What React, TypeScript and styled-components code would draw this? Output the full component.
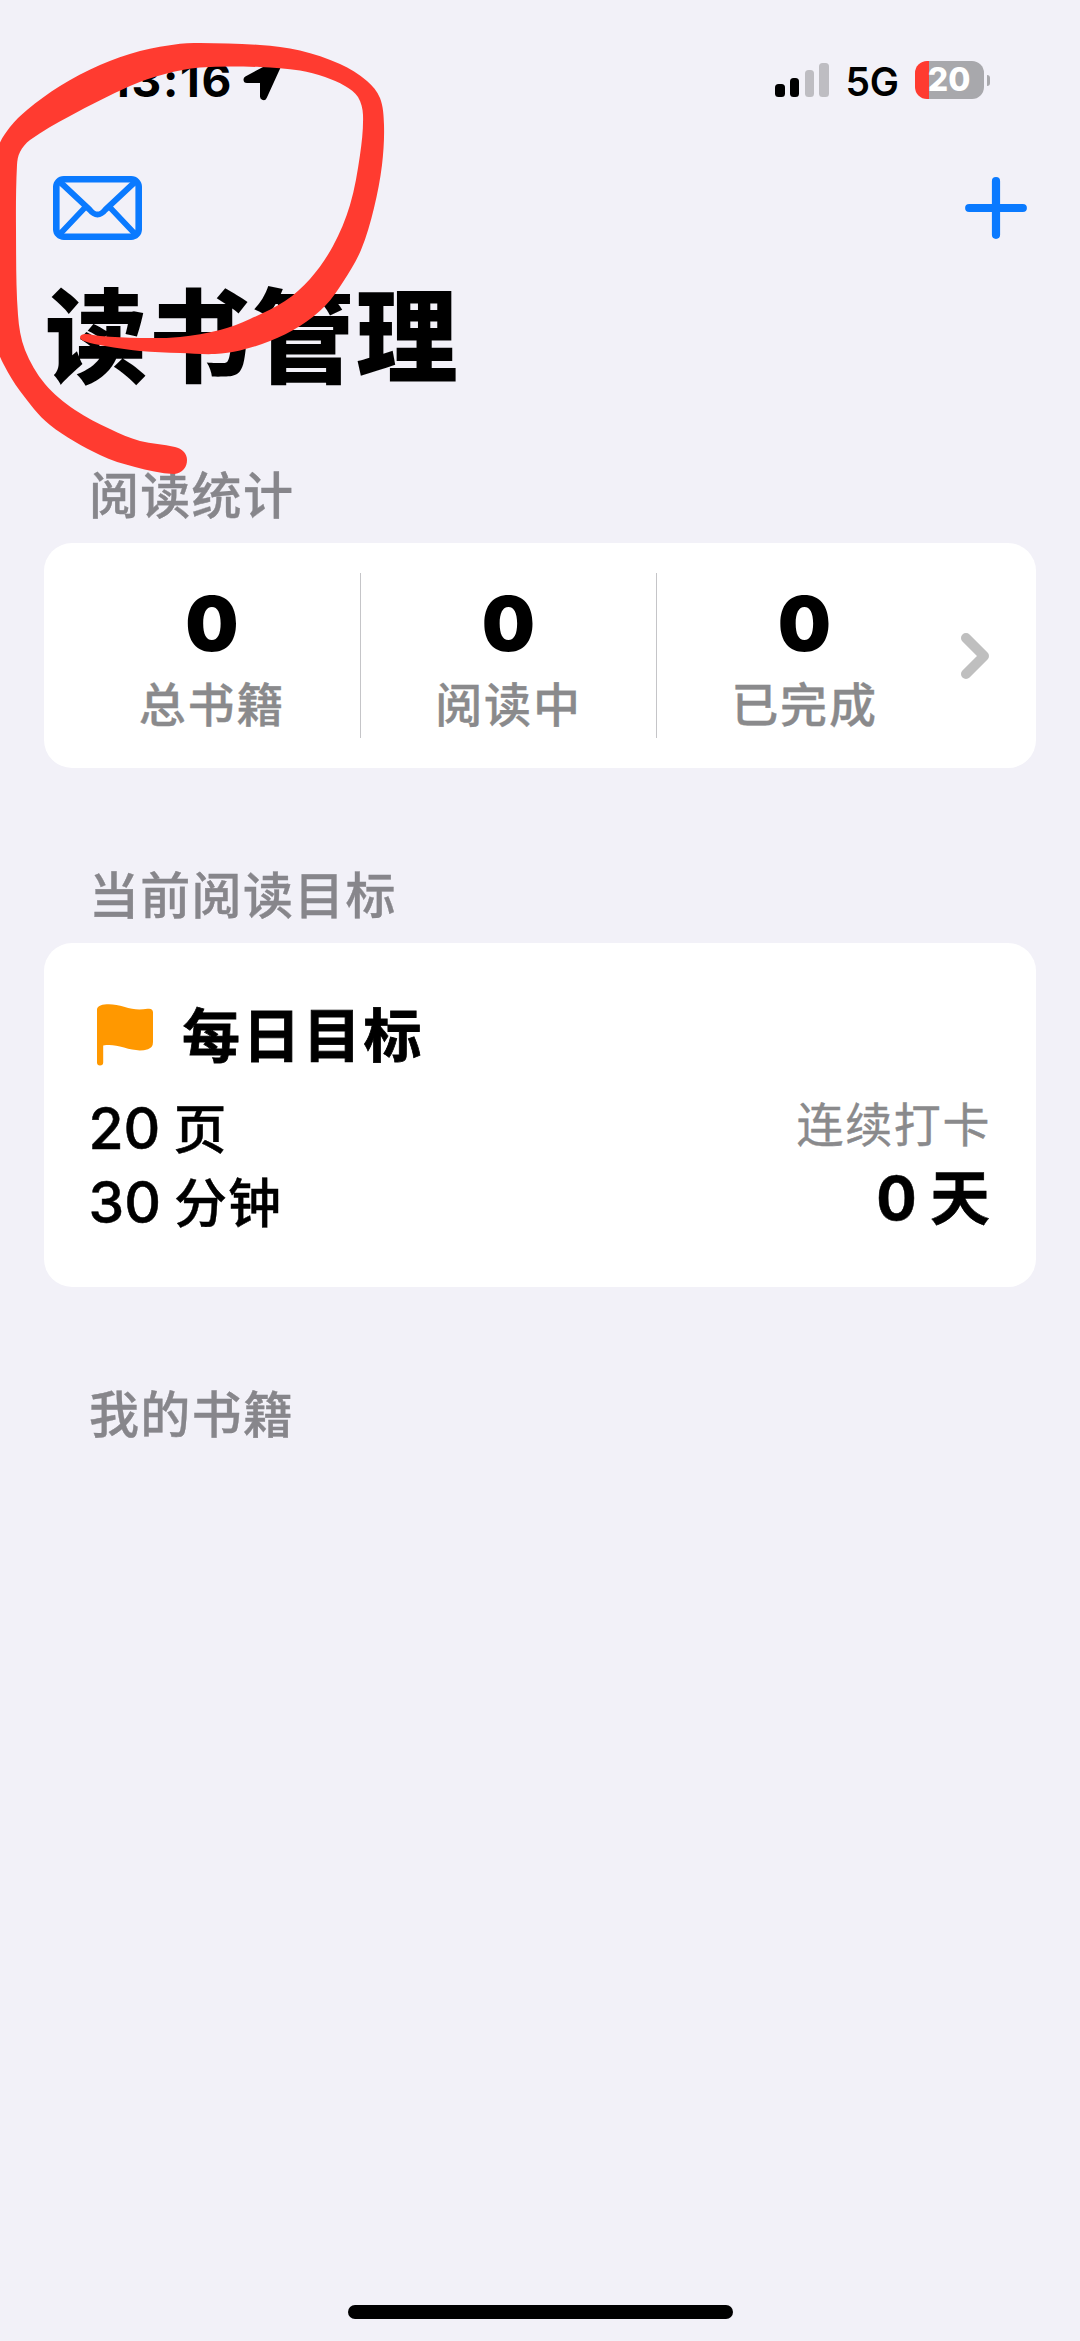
import React from "react";
import styled, { createGlobalStyle } from "styled-components";

const GlobalStyle = createGlobalStyle`
  *, *::before, *::after { box-sizing: border-box; }
  body {
    margin: 0;
    background: #f2f1f8;
    color: #000;
    font-family: "Inter", "Noto Sans CJK SC", sans-serif;
  }
  svg { display: block; flex: none; }
`;

const Screen = styled.div`
  position: relative;
  display: flex;
  flex-direction: column;
  width: 1080px;
  height: 2341px;
  overflow: hidden;
  background: #f2f1f8;
`;

const StatusBar = styled.header`
  display: flex;
  justify-content: space-between;
  align-items: center;
  height: 160px;
  padding: 0 90px 0 110px;
`;

const StatusGroup = styled.div<{ $gap: number }>`
  display: flex;
  align-items: center;
  gap: ${(p) => p.$gap}px;
`;

const Time = styled.span`
  font-size: 46px;
  line-height: 54px;
  font-weight: 700;
  width: 122px;
  white-space: nowrap;
  letter-spacing: 1.7px;
`;

const Network = styled.span`
  width: 52px;
  margin: 3px 0 0 17px;
  font-size: 39px;
  line-height: 48px;
  font-weight: 600;
  letter-spacing: -0.4px;
`;

const Bars = styled.div`
  display: flex;
  align-items: flex-end;
  gap: 5.3px;
  height: 34px;
`;

const Bar = styled.i<{ $height: number; $on: boolean }>`
  width: 9.3px;
  height: ${(p) => p.$height}px;
  border-radius: 3.5px;
  background: ${(p) => (p.$on ? "#000" : "#bebdc2")};
`;

const BatteryWrap = styled.div`
  display: flex;
  align-items: center;
  gap: 3px;
  margin-left: 17px;
`;

const Battery = styled.div`
  display: flex;
  align-items: center;
  justify-content: center;
  width: 69px;
  height: 38px;
  border-radius: 12px;
  background: linear-gradient(to right, #ff3b30 14px, #a8a8ac 14px);
  color: #fff;
  font-size: 32px;
  line-height: 38px;
  font-weight: 800;
`;

const BatteryTip = styled.i`
  width: 3.5px;
  height: 11px;
  border-radius: 0 4px 4px 0;
  background: #a8a8ac;
`;

const NavBar = styled.nav`
  display: flex;
  justify-content: space-between;
  align-items: center;
  height: 96px;
  padding: 0 53px;
`;

const NavButton = styled.button`
  padding: 0;
  border: 0;
  background: none;
  color: #0a7aff;
`;

const Title = styled.h1`
  margin: 22px 0 0 45px;
  font-size: 102px;
  line-height: 120px;
  font-weight: 800;
  letter-spacing: 1.6px;
`;

const Section = styled.section<{ $top: number }>`
  margin: ${(p) => p.$top}px 44px 0;
`;

const SectionTitle = styled.h2`
  margin: 0 0 15px 45px;
  font-size: 50px;
  line-height: 64px;
  font-weight: 500;
  letter-spacing: 1.3px;
  color: #87868b;
  -webkit-text-stroke: 0.35px #87868b;
`;

const Card = styled.div`
  background: #fff;
  border-radius: 28px;
`;

const StatsCard = styled(Card)`
  display: flex;
  height: 225px;
  padding: 30px 20px;
`;

const Stat = styled.div`
  display: flex;
  flex-direction: column;
  align-items: center;
  width: 296px;
  height: 165px;
  padding-top: 9px;
  & + & { border-left: 1px solid #c5c5c8; }
`;

const StatValue = styled.strong`
  font-size: 75px;
  line-height: 84px;
  font-weight: 900;
`;

const StatLabel = styled.span`
  margin-top: 10px;
  font-size: 47px;
  line-height: 58px;
  font-weight: 500;
  letter-spacing: 1.8px;
  color: #8a8a8c;
  -webkit-text-stroke: 0.35px #8a8a8c;
`;

const Disclosure = styled.div`
  display: flex;
  align-items: center;
  margin: 0 0 0 8px;
`;

const GoalCard = styled(Card)`
  display: flex;
  flex-direction: column;
  height: 344px;
  padding: 55px 47px 0 46px;
`;

const GoalHeading = styled.div`
  display: flex;
  align-items: center;
  gap: 26px;
  height: 74px;
`;

const GoalTitle = styled.h3`
  margin: 1px 0 0;
  font-size: 58px;
  line-height: 74px;
  font-weight: 700;
  letter-spacing: 2.5px;
  -webkit-text-stroke: 0.8px #000;
`;

const GoalBody = styled.div`
  display: flex;
  justify-content: space-between;
`;

const GoalTargets = styled.div`
  display: flex;
  flex-direction: column;
  margin-left: -1.5px;
  padding-top: 21px;
  font-size: 55px;
  line-height: 72.5px;
  font-weight: 500;
`;

const Quantity = styled.span`
  font-family: "Inter", sans-serif;
  font-size: 57px;
  font-weight: 500;
  -webkit-text-stroke: 0.5px #000;
`;

const Unit = styled.span`
  margin-left: 13px;
  font-size: 53px;
  letter-spacing: 1px;
  -webkit-text-stroke: 0.4px #000;
`;

const Streak = styled.div`
  display: flex;
  flex-direction: column;
  align-items: flex-end;
  padding-top: 20px;
`;

const StreakLabel = styled.span`
  font-size: 47px;
  line-height: 66px;
  font-weight: 400;
  letter-spacing: 1.6px;
  margin-right: -2px;
  color: #8a8a8c;
  -webkit-text-stroke: 0.4px #8a8a8c;
`;

const StreakValue = styled.strong`
  margin-top: 2px;
  margin-right: -1px;
  font-size: 60px;
  line-height: 76px;
  font-weight: 700;
  word-spacing: -1px;
  -webkit-text-stroke: 0.5px #000;
`;

const HomeIndicator = styled.div`
  width: 385px;
  height: 14px;
  margin: auto auto 22px 348px;
  border-radius: 7px;
  background: #000;
`;

const Ink = styled.svg`
  position: absolute;
  top: 0;
  left: 0;
  pointer-events: none;
`;

type Point = [number, number];

const strokeOutline: Point[] = [
  [174, 474], [135, 467], [100, 455], [50, 425], [20, 391], [4, 365], [-4, 345],
  [-10, 300], [-10, 180], [-2, 147], [10, 127], [27, 110], [60, 86], [100, 65],
  [140, 51], [180, 43.7], [200, 43], [260, 45], [300, 50.5], [340, 64], [367, 81],
  [380, 98], [384, 125], [382, 165], [374, 208], [361, 250], [343, 282],
  [325, 306], [300, 326], [270, 341], [240, 350.5], [215, 354], [180, 353],
  [140, 351], [105, 346], [84, 341], [80, 337], [85, 334], [100, 336], [140, 338],
  [180, 337], [220, 330], [250, 319], [285, 301], [310, 279], [333, 246],
  [350, 205], [360, 155], [363, 115], [358, 97], [345, 86], [325, 77], [300, 70.5],
  [260, 67], [200, 67.5], [165, 74], [130, 86], [70, 116], [30, 140], [20, 152],
  [17, 165], [16, 230], [18, 315], [25, 350], [45, 384], [75, 410], [110, 429],
  [140, 441], [175, 447], [184, 452], [187, 460], [184, 469],
];

const smoothClosedPath = (points: Point[]) => {
  const n = points.length;
  const at = (i: number) => points[(i + n) % n];
  let d = `M${points[0][0]} ${points[0][1]}`;
  for (let i = 0; i < n; i++) {
    const [p0, p1, p2, p3] = [at(i - 1), at(i), at(i + 1), at(i + 2)];
    const k = Math.hypot(p2[0] - p1[0], p2[1] - p1[1]) / 3;
    const tangent = (a: Point, b: Point) => {
      const len = Math.hypot(b[0] - a[0], b[1] - a[1]) || 1;
      return [((b[0] - a[0]) / len) * k, ((b[1] - a[1]) / len) * k];
    };
    const t1 = tangent(p0, p2);
    const t2 = tangent(p1, p3);
    d += `C${p1[0] + t1[0]} ${p1[1] + t1[1]} ${p2[0] - t2[0]} ${p2[1] - t2[1]} ${p2[0]} ${p2[1]}`;
  }
  return d + "Z";
};

const LocationIcon = () => (
  <svg width="40" height="42" viewBox="0 0 40 42">
    <path
      d="M36 3.5 L20.5 37.5 V20.5 H4 Z"
      fill="#000"
      stroke="#000"
      strokeWidth="7"
      strokeLinejoin="round"
    />
  </svg>
);

const EnvelopeIcon = () => (
  <svg width="89" height="64" viewBox="0 0 89 64" fill="none" stroke="currentColor">
    <rect x="3.3" y="3.3" width="82.4" height="57.4" rx="7.5" strokeWidth="6.6" />
    <path d="M6 5 L36.5 33.5 Q44.5 43.5 52.5 33.5 L83 5" strokeWidth="6" />
    <path d="M6 59 L32 31.5 M83 59 L57 31.5" strokeWidth="5.6" />
  </svg>
);

const PlusIcon = () => (
  <svg width="62" height="62" viewBox="0 0 62 62">
    <path
      d="M31 4.2 V57.8 M4.2 31 H57.8"
      stroke="currentColor"
      strokeWidth="8.2"
      strokeLinecap="round"
    />
  </svg>
);

const ChevronIcon = () => (
  <svg width="30" height="48" viewBox="0 0 30 48" fill="none">
    <path
      d="M6 6 L24 24 L6 42"
      stroke="#bfbfbf"
      strokeWidth="10"
      strokeLinecap="round"
      strokeLinejoin="round"
    />
  </svg>
);

const FlagIcon = () => (
  <svg width="66" height="62" viewBox="0 0 66 62" fill="#ff9800">
    <path d="M7 58.5 V5.5 Q7 2.6 10.5 1.4 C17 -0.6 26 0.2 34 2.8 C43 5.6 49 6 57.5 4.8 Q63 4 63 8.5 V38 Q63 43.5 58 45.2 C51 47.4 43 46.4 34 43.6 C26 41 20 40.4 13.2 41.4 V58.5 Q13.2 61.5 10 61.5 Q7 61.5 7 58.5 Z" />
  </svg>
);

const signal = [
  { height: 13, on: true },
  { height: 19.5, on: true },
  { height: 27, on: false },
  { height: 34, on: false },
];

const stats = [
  { value: 0, label: "总书籍" },
  { value: 0, label: "阅读中" },
  { value: 0, label: "已完成" },
];

export default function App() {
  return (
    <>
      <GlobalStyle />
      <Screen>
        <StatusBar>
          <StatusGroup $gap={11}>
            <Time>13:16</Time>
            <LocationIcon />
          </StatusGroup>
          <StatusGroup $gap={0}>
            <Bars>
              {signal.map((bar) => (
                <Bar key={bar.height} $height={bar.height} $on={bar.on} />
              ))}
            </Bars>
            <Network>5G</Network>
            <BatteryWrap>
              <Battery>20</Battery>
              <BatteryTip />
            </BatteryWrap>
          </StatusGroup>
        </StatusBar>

        <NavBar>
          <NavButton aria-label="邮件">
            <EnvelopeIcon />
          </NavButton>
          <NavButton aria-label="添加">
            <PlusIcon />
          </NavButton>
        </NavBar>

        <Title>读书管理</Title>

        <Section $top={66}>
          <SectionTitle>阅读统计</SectionTitle>
          <StatsCard>
            {stats.map((stat) => (
              <Stat key={stat.label}>
                <StatValue>{stat.value}</StatValue>
                <StatLabel>{stat.label}</StatLabel>
              </Stat>
            ))}
            <Disclosure>
              <ChevronIcon />
            </Disclosure>
          </StatsCard>
        </Section>

        <Section $top={96}>
          <SectionTitle>当前阅读目标</SectionTitle>
          <GoalCard>
            <GoalHeading>
              <FlagIcon />
              <GoalTitle>每日目标</GoalTitle>
            </GoalHeading>
            <GoalBody>
              <GoalTargets>
                <div>
                  <Quantity>20</Quantity>
                  <Unit>页</Unit>
                </div>
                <div>
                  <Quantity>30</Quantity>
                  <Unit>分钟</Unit>
                </div>
              </GoalTargets>
              <Streak>
                <StreakLabel>连续打卡</StreakLabel>
                <StreakValue>0 天</StreakValue>
              </Streak>
            </GoalBody>
          </GoalCard>
        </Section>

        <Section $top={96}>
          <SectionTitle>我的书籍</SectionTitle>
        </Section>

        <HomeIndicator />

        <Ink width="420" height="500" viewBox="0 0 420 500">
          <path d={smoothClosedPath(strokeOutline)} fill="#ff3b30" />
        </Ink>
      </Screen>
    </>
  );
}
